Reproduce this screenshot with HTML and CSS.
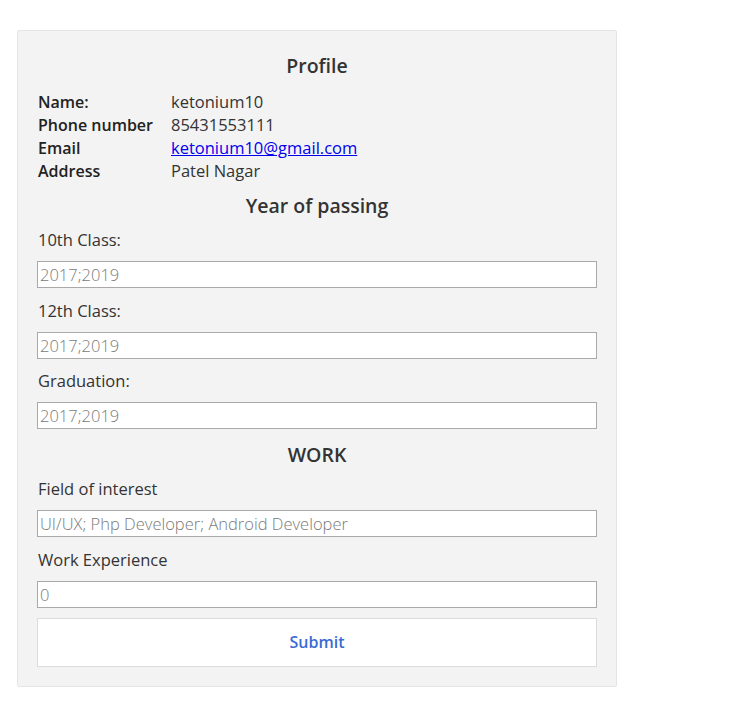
FILE: index.html
```html
<!DOCTYPE html>
<html>
<head>
<meta charset="utf-8">
<link rel="stylesheet" href="styles.css">
</head>
<body>
<div class="card">
  <h2 class="heading heading-first">Profile</h2>
  <div class="info">
    <div class="info-key">Name:</div><div class="info-val">ketonium10</div>
    <div class="info-key">Phone number</div><div class="info-val">85431553111</div>
    <div class="info-key">Email</div><div class="info-val"><a class="mail" href="#">ketonium10@gmail.com</a></div>
    <div class="info-key">Address</div><div class="info-val">Patel Nagar</div>
  </div>
  <h2 class="heading heading-year">Year of passing</h2>
  <label class="field-label">10th Class:</label>
  <input class="field" type="text" placeholder="2017;2019">
  <label class="field-label">12th Class:</label>
  <input class="field" type="text" placeholder="2017;2019">
  <label class="field-label">Graduation:</label>
  <input class="field" type="text" placeholder="2017;2019">
  <h2 class="heading heading-work">WORK</h2>
  <label class="field-label">Field of interest</label>
  <input class="field" type="text" placeholder="UI/UX; Php Developer; Android Developer">
  <label class="field-label">Work Experience</label>
  <input class="field" type="text" placeholder="0">
  <button class="submit" type="button">Submit</button>
</div>
</body>
</html>
```
FILE: styles.css
```css
html, body {
  margin: 0;
  padding: 0;
  background: #ffffff;
}
body {
  padding: 30px 0 0 17px;
  font-family: "Open Sans", "Noto Sans", sans-serif;
  color: #333;
}
.card {
  box-sizing: border-box;
  width: 600px;
  background: #f3f3f3;
  border: 1px solid #e4e4e4;
  border-radius: 2px;
  padding: 20px 19px 19px 19px;
  display: flex;
  flex-direction: column;
}
.heading {
  margin: 0;
  font-size: 19.5px;
  line-height: 26px;
  font-weight: 600;
  color: #333;
  text-align: center;
}
.heading-first {
  margin-top: 2px;
}
.heading-year {
  margin-top: 11px;
}
.heading-work {
  margin-top: 13px;
}
.info {
  display: grid;
  grid-template-columns: 133px 1fr;
  grid-auto-rows: 23px;
  align-items: baseline;
  margin: 11px 0 0 1px;
  font-size: 16.5px;
  line-height: 23px;
}
.info-key {
  font-weight: 600;
  font-size: 16px;
  color: #222;
}
.info-val {
  color: #333;
}
.mail {
  color: #0000ee;
  text-decoration: underline;
}
.field-label {
  display: block;
  margin: 10.5px 0 9px 1px;
  font-size: 16.5px;
  line-height: 24px;
  color: #333;
}
.heading + .field-label {
  margin-top: 9px;
}
.field {
  box-sizing: border-box;
  width: 560px;
  height: 27px;
  margin: 0;
  padding: 0 2px;
  border: 1px solid #a9a9a9;
  background: #fff;
  font-family: inherit;
  font-size: 16.5px;
}
.field::placeholder {
  color: #7a7a7a;
  font-weight: 300;
}
.submit {
  box-sizing: border-box;
  width: 560px;
  height: 49px;
  margin-top: 10px;
  background: #fff;
  border: 1px solid #dcdcdc;
  font-family: inherit;
  font-size: 16px;
  font-weight: 600;
  color: #3a6ad4;
}
```
